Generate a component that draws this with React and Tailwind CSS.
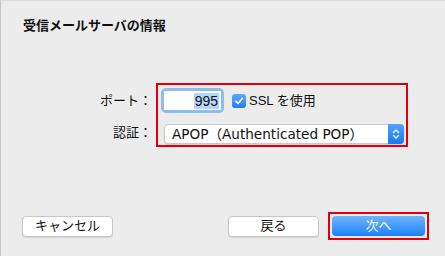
import React from "react";

const font = { fontFamily: '"Liberation Sans", "Noto Sans CJK JP", sans-serif' };

export default function App() {
  return (
    <div
      className="w-[445px] h-[256px] bg-[#ececec] border-l border-l-[#c4c4c4] border-t border-t-[#dcdcdc] flex flex-col text-[#111]"
      style={font}
    >
      <div className="pl-[22px] pt-[16px] text-[13px] leading-[18px] font-bold">受信メールサーバの情報</div>

      <div className="mt-[48px] flex items-start">
        <div className="w-[151px] flex flex-col items-end pt-[10px] text-[13px] leading-[16px]">
          <div className="h-[16px]">ポート：</div>
          <div className="h-[16px] mt-[16px]">認証：</div>
        </div>
        <div className="ml-[4px] w-[252px] h-[64px] border-2 border-[#e0000d] pl-[3px] pt-[3px]">
          <div className="flex items-center">
            <div className="w-[63px] h-[25px] rounded-[5px] bg-[#8cbcf0] p-[3px]">
              <div className="w-full h-full bg-white flex items-center justify-end pr-[2px] text-[14px]">
                <span className="bg-[#b4d5fe] px-[1px] leading-[16px]">995</span>
              </div>
            </div>
            <div className="ml-[8px] w-[14px] h-[14px] rounded-[3px] bg-gradient-to-b from-[#5eaaf9] to-[#1d7ff5] flex items-center justify-center">
              <svg width="10" height="10" viewBox="0 0 10 10">
                <path d="M1.8 5.2 L4 7.4 L8.3 2.4" fill="none" stroke="white" strokeWidth="1.6" strokeLinecap="round" strokeLinejoin="round" />
              </svg>
            </div>
            <div className="ml-[3px] text-[13px] leading-[16px]">SSL を使用</div>
          </div>
          <div className="mt-[11px] ml-[3px] w-[240px] h-[20px] bg-white border border-[#c9c9c9] rounded-[4px] shadow-[0_1px_1px_rgba(0,0,0,0.12)] flex items-center">
            <div
              className="flex-1 pl-[7px] text-[13.6px] leading-[18px] whitespace-nowrap"
              style={{ fontFamily: '"DejaVu Sans", "Noto Sans CJK JP", sans-serif' }}
            >
              APOP（Authenticated POP）
            </div>
            <div className="w-[16px] h-[20px] -mr-px rounded-r-[4px] bg-gradient-to-b from-[#4ea2fb] to-[#1979f2] flex items-center justify-center">
              <svg width="8" height="12" viewBox="0 0 8 12">
                <path d="M1.5 4.5 L4 2 L6.5 4.5 M1.5 7.5 L4 10 L6.5 7.5" fill="none" stroke="white" strokeWidth="1.3" strokeLinecap="round" strokeLinejoin="round" />
              </svg>
            </div>
          </div>
        </div>
      </div>

      <div className="mt-auto mb-[16px] flex items-center pl-[21px] pr-[16px]">
        <button className="w-[91px] h-[21px] bg-white border border-[#c6c6c6] rounded-[4px] shadow-[0_1px_1px_rgba(0,0,0,0.1)] text-[13px] leading-[16px] text-[#111]">キャンセル</button>
        <div className="ml-auto flex items-center">
          <button className="w-[91px] h-[21px] bg-white border border-[#c6c6c6] rounded-[4px] shadow-[0_1px_1px_rgba(0,0,0,0.1)] text-[13px] leading-[16px] text-[#111]">戻る</button>
          <div className="ml-[9px] border-2 border-[#e0000d] p-[2px]">
            <button className="w-[93px] h-[20px] rounded-[4px] bg-gradient-to-b from-[#6db4fb] to-[#1780fe] text-white text-[13px] leading-[16px] block">次へ</button>
          </div>
        </div>
      </div>
    </div>
  );
}
